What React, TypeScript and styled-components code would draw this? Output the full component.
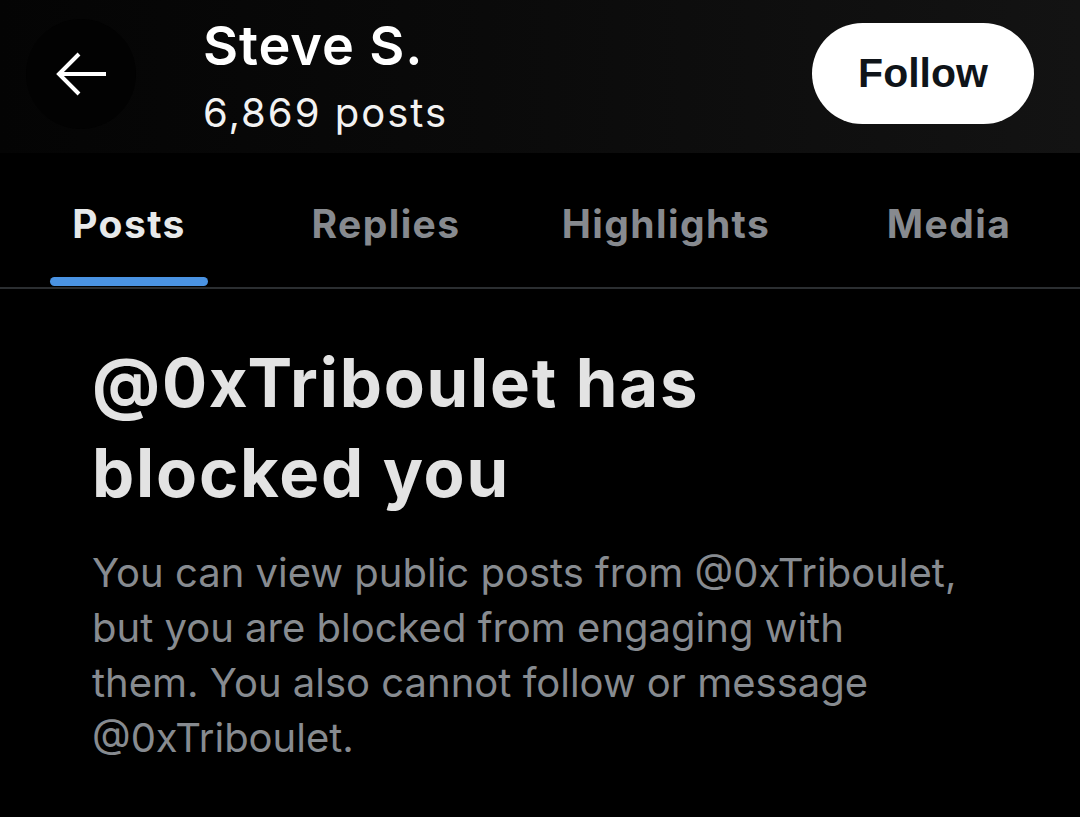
import React from "react";
import styled, { createGlobalStyle } from "styled-components";

const GlobalStyle = createGlobalStyle`
  html, body {
    margin: 0;
    padding: 0;
    background: #000;
  }
  body {
    font-family: Inter, "Noto Sans", "Liberation Sans", sans-serif;
    -webkit-font-smoothing: antialiased;
  }
`;

const Page = styled.div`
  width: 1080px;
  height: 817px;
  background: #000;
  overflow: hidden;
  display: flex;
  flex-direction: column;
`;

const Header = styled.header`
  height: 153px;
  box-sizing: border-box;
  padding: 0 46px 0 26px;
  display: flex;
  align-items: center;
  background: linear-gradient(90deg, #040404 0%, #0a0a0a 45%, #131313 100%);
`;

const BackButton = styled.button`
  width: 110px;
  height: 110px;
  border-radius: 50%;
  border: none;
  padding: 0;
  background: #020202;
  display: flex;
  align-items: center;
  justify-content: center;
  color: #fff;
  margin-top: -5px;
`;

const TitleBlock = styled.div`
  align-self: flex-start;
  margin-top: 16px;
  margin-left: 67px;
  display: flex;
  flex-direction: column;
  gap: 12px;
`;

const Name = styled.div`
  color: #fff;
  font-size: 54px;
  font-weight: 600;
  line-height: 60px;
  letter-spacing: 0.9px;
`;

const PostCount = styled.div`
  color: #f2f2f2;
  font-size: 40px;
  font-weight: 400;
  line-height: 50px;
  letter-spacing: 2px;
`;

const FollowButton = styled.button`
  margin-left: auto;
  margin-bottom: 6px;
  width: 222px;
  height: 101px;
  border-radius: 51px;
  border: none;
  background: #fff;
  color: #0f1419;
  font-family: "Liberation Sans", Arial, sans-serif;
  font-size: 41px;
  font-weight: 700;
  display: flex;
  align-items: center;
  justify-content: center;
  padding: 0;
`;

const TabBar = styled.nav`
  height: 136px;
  box-sizing: border-box;
  border-bottom: 2px solid #2b2e31;
  display: grid;
  grid-template-columns: 258px 256px 304px 1fr;
`;

const Tab = styled.div<{ $active?: boolean }>`
  display: flex;
  flex-direction: column;
  align-items: center;
  justify-content: flex-end;
  color: ${(p) => (p.$active ? "#e7e9ea" : "#878a8f")};
  font-size: 39px;
  font-weight: 700;
  letter-spacing: 1.4px;
`;

const TabLabel = styled.span`
  line-height: 46px;
  margin-bottom: 30px;
`;

const Indicator = styled.div<{ $show?: boolean }>`
  width: 158px;
  height: 9px;
  border-radius: 5px;
  background: ${(p) => (p.$show ? "#4a93e3" : "transparent")};
  margin-bottom: 1px;
`;

const Content = styled.main`
  padding: 49px 60px 0 92px;
`;

const Heading = styled.h1`
  margin: 0;
  color: #e3e3e3;
  font-size: 67px;
  font-weight: 700;
  line-height: 90px;
  letter-spacing: 1.8px;
`;

const Body = styled.p`
  margin: 27px 0 0;
  color: #878b90;
  font-size: 40px;
  font-weight: 400;
  line-height: 55px;
`;

const ArrowIcon = () => (
  <svg width="54" height="46" viewBox="0 0 54 46" fill="none">
    <path
      d="M52 23H4M25 3L5 23l20 20"
      stroke="#fff"
      strokeWidth="4"
      strokeLinecap="butt"
      strokeLinejoin="miter"
    />
  </svg>
);

const tabs = ["Posts", "Replies", "Highlights", "Media"];

export default function App() {
  return (
    <Page>
      <GlobalStyle />
      <Header>
        <BackButton aria-label="Back">
          <ArrowIcon />
        </BackButton>
        <TitleBlock>
          <Name>Steve S.</Name>
          <PostCount>6,869 posts</PostCount>
        </TitleBlock>
        <FollowButton>Follow</FollowButton>
      </Header>
      <TabBar>
        {tabs.map((t, i) => (
          <Tab key={t} $active={i === 0}>
            <TabLabel>{t}</TabLabel>
            <Indicator $show={i === 0} />
          </Tab>
        ))}
      </TabBar>
      <Content>
        <Heading>
          @0xTriboulet has
          <br />
          blocked you
        </Heading>
        <Body>
          You can view public posts from @0xTriboulet,
          <br />
          but you are blocked from engaging with
          <br />
          them. You also cannot follow or message
          <br />
          @0xTriboulet.
        </Body>
      </Content>
    </Page>
  );
}
